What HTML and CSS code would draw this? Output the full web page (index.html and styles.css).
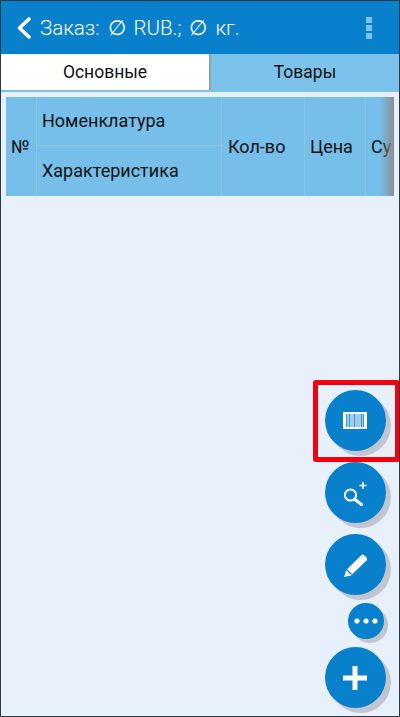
FILE: index.html
```html
<!DOCTYPE html>
<html lang="ru">

<head>
    <meta charset="UTF-8">
    <meta name="viewport" content="width=device-width, initial-scale=1.0">
    <title>Заказ</title>
    <link rel="stylesheet" href="styles.css">
</head>

<body>
    <div class="screen">
        <header class="topbar">
            <svg class="back" width="16" height="22" viewBox="0 0 16 22">
                <path d="M13 2 L3.5 11 L13 20" fill="none" stroke="#fff" stroke-width="3.6" stroke-linecap="round" stroke-linejoin="round" />
            </svg>
            <span class="title">Заказ: ∅ RUB.; ∅ кг.</span>
            <div class="dots"><i></i><i></i><i></i></div>
        </header>
        <nav class="tabs">
            <div class="tab active">Основные</div>
            <div class="tab">Товары</div>
        </nav>
        <div class="content">
            <div class="grid">
                <div class="cell num">№</div>
                <div class="cell name">Номенклатура</div>
                <div class="cell char">Характеристика</div>
                <div class="cell qty">Кол-во</div>
                <div class="cell price">Цена</div>
                <div class="cell sum">Су</div>
                <div class="fade"></div>
            </div>
        </div>
        <div class="fabs">
            <div class="fab first">
                <svg width="24" height="17" viewBox="0 0 24 17">
                    <rect width="24" height="17" fill="#fff" />
                    <path d="M3 2h1.5v13H3zM5.5 2h2v13h-2zM8.5 2h1v13h-1zM10.5 2h2v13h-2zM13.5 2h1v13h-1zM15.5 2h1v13h-1zM17.5 2h2v13h-2zM20 2h1v13h-1z" fill="#3a97d4" />
                </svg>
                <div class="marker"></div>
            </div>
            <div class="fab">
                <svg width="24" height="26" viewBox="0 0 24 26">
                    <circle cx="7.5" cy="15" r="5.6" fill="none" stroke="#fff" stroke-width="2" />
                    <path d="M12 19.5 L18.5 24.5" stroke="#fff" stroke-width="3" stroke-linecap="round" />
                    <path d="M20 2v7M16.5 5.5h7" stroke="#fff" stroke-width="1.5" />
                </svg>
            </div>
            <div class="fab">
                <svg width="24" height="26" viewBox="0 0 24 26">
                    <path d="M1 25 L3.3 18 L18.5 3 Q20 2 21.5 3.5 L23.5 5.5 Q24.5 7 23.5 8.5 L8 23.5 Z" fill="#fff" />
                    <path d="M3.5 17.5 L8.5 22.5" stroke="#0880cb" stroke-width="1.2" />
                </svg>
            </div>
            <div class="fab small">
                <svg width="24" height="6" viewBox="0 0 24 6">
                    <circle cx="3" cy="3" r="2.6" fill="#fff" />
                    <circle cx="12" cy="3" r="2.6" fill="#fff" />
                    <circle cx="21" cy="3" r="2.6" fill="#fff" />
                </svg>
            </div>
            <div class="fab">
                <svg width="24" height="24" viewBox="0 0 24 24">
                    <path d="M9.5 0h5v9.5H24v5h-9.5V24h-5v-9.5H0v-5h9.5z" fill="#fff" />
                </svg>
            </div>
        </div>
    </div>
</body>

</html>
```

FILE: styles.css
```css
* {
    margin: 0;
    padding: 0;
    box-sizing: border-box;
}

body {
    background-color: #e8f0fb;
    font-family: Roboto, "Liberation Sans", sans-serif;
    color: #111;
}

.screen {
    width: 400px;
    height: 717px;
    border: 1px solid #2b3a42;
    position: relative;
    overflow: hidden;
    display: flex;
    flex-direction: column;
}

.topbar {
    height: 53px;
    background-color: #0880cb;
    color: #fff;
    display: flex;
    align-items: center;
    padding: 0 27px 0 15px;
}

.back {
    margin-right: 8px;
}

.title {
    flex: 1;
    font-size: 20.5px;
    font-weight: 300;
    word-spacing: 3px;
    white-space: nowrap;
}

.dots {
    display: flex;
    flex-direction: column;
    gap: 2px;
}

.dots i {
    display: block;
    width: 6px;
    height: 6px;
    background-color: #7cc3eb;
}

.tabs {
    height: 38px;
    display: flex;
    border-bottom: 2px solid #7cc3eb;
}

.tab {
    flex: 1;
    background-color: #7cc3eb;
    text-align: center;
    font-size: 17.5px;
    line-height: 36px;
}

.tab.active {
    flex: none;
    width: 210px;
    background-color: #fff;
    border-right: 2px solid #8fa3ad;
}

.content {
    flex: 1;
    padding: 5px 5px 0;
}

.grid {
    height: 99px;
    position: relative;
    overflow: hidden;
    display: grid;
    grid-template-columns: 31px 185px 83px 61px 28px;
    grid-template-rows: 49px 50px;
    background-color: #75bfea;
    font-size: 18px;
}

.cell {
    display: flex;
    align-items: center;
    padding: 0 0 1px 5px;
    border-right: 1px solid #90c4dd;
    white-space: nowrap;
    overflow: hidden;
}

.num,
.qty,
.price,
.sum {
    grid-row: 1 / 3;
}

.num {
    grid-column: 1;
}

.name {
    grid-column: 2;
    grid-row: 1;
    border-bottom: 1px solid #90c4dd;
}

.char {
    grid-column: 2;
    grid-row: 2;
}

.qty {
    grid-column: 3;
    padding-left: 6px;
}

.price {
    grid-column: 4;
}

.sum {
    grid-column: 5;
    border-right: 0;
}

.fade {
    position: absolute;
    top: 0;
    right: 0;
    width: 14px;
    height: 100%;
    background: linear-gradient(to right, rgba(125, 130, 140, 0), #8a8f96);
}

.fabs {
    position: absolute;
    top: 389px;
    right: 13.5px;
    display: flex;
    flex-direction: column;
    align-items: flex-end;
}

.fab {
    width: 61px;
    height: 61px;
    border-radius: 50%;
    background-color: #0880cb;
    box-shadow: 5px 5px 0 #c0c5d0;
    display: flex;
    align-items: center;
    justify-content: center;
    margin-bottom: 11px;
    position: relative;
}

.fab.small {
    width: 36px;
    height: 36px;
    margin: -3px 2px 8px 0;
    box-shadow: 4px 4px 0 #c0c5d0;
}

.marker {
    position: absolute;
    top: -10px;
    left: -11.5px;
    width: 87px;
    height: 82px;
    border: 5px solid #f5000f;
    border-radius: 3px;
}
```
